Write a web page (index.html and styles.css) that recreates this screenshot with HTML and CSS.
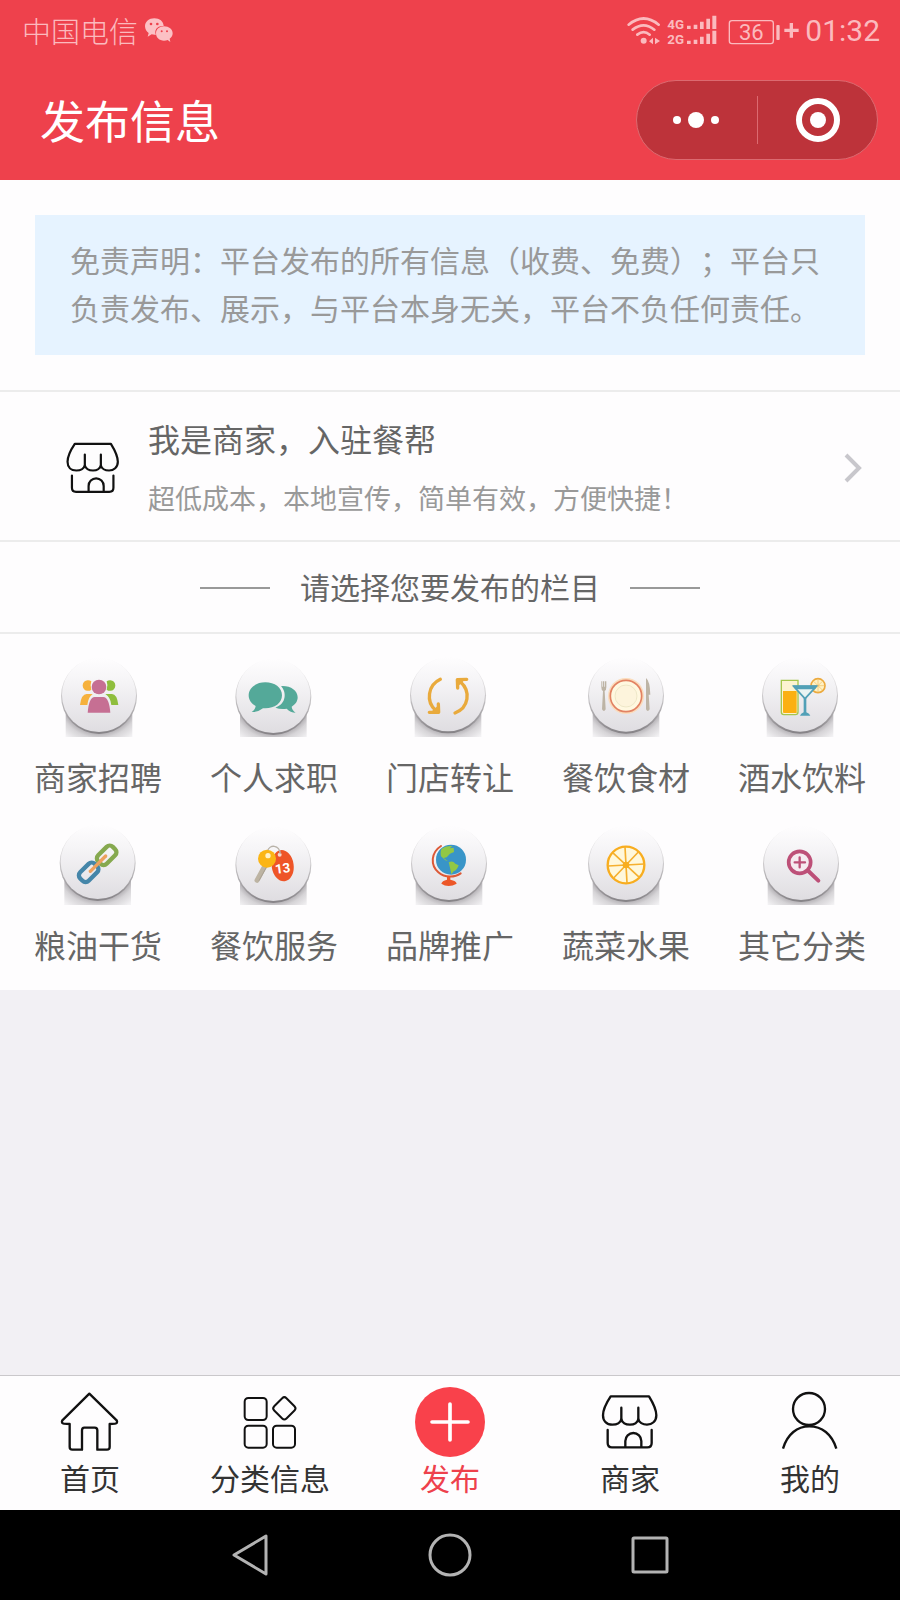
FILE: index.html
```html
<!DOCTYPE html>
<html lang="zh-CN">
<head>
<meta charset="utf-8">
<meta name="viewport" content="width=device-width, initial-scale=1">
<title>发布信息</title>
<link rel="stylesheet" href="styles.css">
</head>
<body>
<svg class="defs" width="0" height="0" aria-hidden="true">
  <defs>
    <linearGradient id="face" x1="0" y1="0" x2="0" y2="1">
      <stop offset="0" stop-color="#fefdfe"/><stop offset=".3" stop-color="#f6f5f7"/><stop offset="1" stop-color="#dfdde1"/>
    </linearGradient>
    <linearGradient id="rim" x1="0" y1="0" x2="0" y2="1">
      <stop offset="0" stop-color="#fdfcfd"/><stop offset=".45" stop-color="#d2d0d2"/><stop offset="1" stop-color="#858286"/>
    </linearGradient>
    <radialGradient id="shade" gradientUnits="userSpaceOnUse" cx="0" cy="0" r="165">
      <stop offset=".68" stop-color="#b4b1b5"/><stop offset=".77" stop-color="#d6d4d7"/><stop offset=".95" stop-color="#f3f2f4"/>
    </radialGradient>
    <g id="disc">
      <rect x="-100" y="45" width="200" height="100" fill="url(#shade)"/>
      <circle cy="1" r="114" fill="url(#rim)"/>
      <circle cy="-2" r="111" fill="url(#face)"/>
    </g>
    <symbol id="shop" viewBox="435 81 210 210">
      <g fill="none" stroke="#111" stroke-width="7" stroke-linecap="round" stroke-linejoin="round">
        <path d="M482 109H597C610 130 619 150 619 166C619 184 606 194 591 194C578 194 567 187 565 178C562 188 552 194 540 194C528 194 517 188 514 178C511 188 500 194 487 194C470 194 459 183 459 166C459 147 468 130 482 109Z"/>
        <path d="M514 143V178M565 143V178M473 210V249Q473 262 486 262H592Q605 262 605 249V210M526 262V243A24 24 0 0 1 574 243V262"/>
      </g>
    </symbol>
  </defs>
</svg>

<div class="app">
  <header class="header">
    <div class="status">
      <span class="carrier">中国电信</span>
      <svg class="wechat" viewBox="435 52 84 78" aria-hidden="true">
        <path fill="#fcc0c4" d="M463 56C447 56 435 66 435 80C435 89 440 96 446 100L443 111L455 104Q461 106 468 105C461 92 472 77 491 79C490 65 479 56 463 56Z"/>
        <path fill="#fcc0c4" d="M492 80C478 80 468 89 468 101C468 114 478 123 492 123Q498 123 503 121L511 127L509 117C515 113 518 107 518 101C518 89 507 80 492 80Z"/>
        <g fill="#ee414c"><circle cx="453" cy="73" r="4"/><circle cx="472" cy="73" r="4"/><circle cx="485" cy="95" r="3"/><circle cx="501" cy="95" r="3"/></g>
      </svg>
      <svg class="signals" viewBox="75 36 525 102" role="img" aria-label="信号与电量 36%">
        <g fill="none" stroke="#fbbabe" stroke-width="8" stroke-linecap="round">
          <path d="M86 71Q131 34 176 71M98 86Q131 60 163 86M112 101Q131 86 149 101"/>
        </g>
        <g fill="#fbbabe">
          <circle cx="131" cy="119" r="9"/>
          <path d="M159 110V130L147 121ZM165 110V130L180 120Z"/>
          <text class="net" x="202" y="83">4G</text>
          <text class="net" x="202" y="129">2G</text>
          <path d="M261 74h11v10h-11zM281 71h11v13h-11zM300 62h11v22h-11zM319 53h11v31h-11zM337 44h12v40h-12zM261 119h11v10h-11zM281 116h11v13h-11zM300 107h11v22h-11zM319 98h11v31h-11zM337 89h12v40h-12z"/>
          <text class="charge" x="417" y="118">36</text>
          <rect x="529" y="72" width="10" height="45" rx="3"/>
          <path d="M569 66h10v17h17v10h-17v17h-10v-17h-16v-10h16z"/>
        </g>
        <rect x="388" y="59" width="132" height="69" rx="8" fill="none" stroke="#fbbabe" stroke-width="4"/>
      </svg>
      <time class="clock">01:32</time>
    </div>
    <div class="titlebar">
      <h1 class="title">发布信息</h1>
      <div class="capsule">
        <button class="capsule-btn" type="button" aria-label="更多">
          <svg width="50" height="46" viewBox="-24 -23 50 46" fill="#fff"><circle cx="-19" r="4"/><circle r="8"/><circle cx="19" r="4"/></svg>
        </button>
        <span class="capsule-line"></span>
        <button class="capsule-btn" type="button" aria-label="关闭">
          <svg width="50" height="46" viewBox="-26 -23 50 46"><circle r="19" fill="none" stroke="#fff" stroke-width="6"/><circle r="8" fill="#fff"/></svg>
        </button>
      </div>
    </div>
  </header>

  <main class="content">
    <section class="notice-wrap">
      <p class="notice">免责声明：平台发布的所有信息（收费、免费）；平台只负责发布、展示，与平台本身无关，平台不负任何责任。</p>
    </section>

    <a class="merchant" href="#join">
      <svg class="merchant-icon" aria-hidden="true"><use href="#shop"/></svg>
      <span class="merchant-text">
        <span class="merchant-title">我是商家，入驻餐帮</span>
        <span class="merchant-sub">超低成本，本地宣传，简单有效，方便快捷！</span>
      </span>
      <svg class="chevron" viewBox="0 0 20 32" aria-hidden="true"><path d="M3 3L16 16L3 29" fill="none" stroke="#c8c7cc" stroke-width="4"/></svg>
    </a>

    <h2 class="heading"><span class="heading-text">请选择您要发布的栏目</span></h2>

    <nav class="grid" aria-label="栏目">
      <a class="cell" href="#c1">
        <svg class="cell-icon" viewBox="114 51 240 240" aria-hidden="true">
          <use href="#disc" x="237" y="167"/>
          <path fill="#f6b13c" d="M214 124A16 16 0 1 0 214 149Q209 137 214 124ZM180 195Q184 162 200 162H218Q204 172 202 195Z"/>
          <path fill="#8fbe3d" d="M260 124A16 16 0 1 1 260 149Q265 137 260 124ZM295 195Q291 162 276 162H256Q272 172 274 195Z"/>
          <circle cx="237" cy="141" r="22" fill="#c66f93"/>
          <path fill="#c66f93" d="M203 218Q207 171 224 171H250Q267 171 271 218Z"/>
        </svg>
        <span class="cell-label">商家招聘</span>
      </a>
      <a class="cell" href="#c2">
        <svg class="cell-icon" viewBox="642 51 240 240" aria-hidden="true">
          <use href="#disc" x="760" y="170"/>
          <path fill="#54a999" d="M788 138C813 138 833 152 833 172C833 184 826 194 815 200Q816 211 827 218Q811 218 800 206Q782 209 766 203C800 192 800 155 783 139Z"/>
          <path fill="#54a999" d="M736 127C764 127 786 143 786 166C786 189 764 205 736 205H729Q714 217 695 216Q706 209 707 198C694 191 686 180 686 166C686 143 708 127 736 127Z"/>
        </svg>
        <span class="cell-label">个人求职</span>
      </a>
      <a class="cell" href="#c3">
        <svg class="cell-icon" viewBox="150 51 240 240" aria-hidden="true">
          <use href="#disc" x="264" y="165"/>
          <g fill="none" stroke="#e9aa3c" stroke-width="10" stroke-linecap="round" stroke-linejoin="round">
            <path d="M241 118C204 135 196 185 228 212M208 217L236 217L235 192"/>
            <path d="M285 219C326 204 334 154 301 125M320 118L292 119L293 144"/>
          </g>
          <path fill="#e9aa3c" d="M212 217L236 217L235 196ZM316 118L292 119L293 140Z"/>
        </svg>
        <span class="cell-label">门店转让</span>
      </a>
      <a class="cell" href="#c4">
        <svg class="cell-icon" viewBox="138 51 240 240" aria-hidden="true">
          <use href="#disc" x="258" y="166"/>
          <circle cx="258" cy="168" r="54" fill="#fbdcbb"/>
          <circle cx="258" cy="168" r="47" fill="#fff8e0" stroke="#e28263" stroke-width="5"/>
          <circle cx="258" cy="168" r="33" fill="#fdf4dc" stroke="#e6dfbd" stroke-width="2"/>
          <path fill="#bdb4a5" d="M184 124H187V140H189V124H193V140H195V124H199V142Q199 151 194 153L197 208Q192 218 186 208L189 153Q184 151 184 142Z"/>
          <path fill="#bdb4a5" d="M318 114Q330 123 331 164H326L329 208Q323 218 318 208Z"/>
        </svg>
        <span class="cell-label">餐饮食材</span>
      </a>
      <a class="cell" href="#c5">
        <svg class="cell-icon" viewBox="666 51 240 240" aria-hidden="true">
          <use href="#disc" x="780" y="166"/>
          <circle cx="834" cy="137" r="21" fill="#fff1c4" stroke="#ecaa3e" stroke-width="5"/>
          <path stroke="#efbe61" stroke-width="2" d="M834 118V156M815 137H853M821 124L847 150M847 124L821 150"/>
          <path fill="#fcf3d0" stroke="#a6c64c" stroke-width="4" d="M724 121H774V216Q774 224 766 224H732Q724 224 724 216Z"/>
          <path fill="#fbb012" d="M729 153H770V219H732Q729 219 729 216Z"/>
          <path fill="#e9f3f3" stroke="#51a0b7" stroke-width="5" d="M761 139H829L795 176Z"/>
          <path fill="#51a0b7" d="M758 136H832L825 148H766ZM791 174H799V217Q809 221 811 227H780Q782 221 791 217Z"/>
        </svg>
        <span class="cell-label">酒水饮料</span>
      </a>
      <a class="cell" href="#c6">
        <svg class="cell-icon" viewBox="114 45 240 240" aria-hidden="true">
          <use href="#disc" x="233" y="158"/>
          <g fill="none" stroke-width="13">
            <rect x="-31" y="-18" width="62" height="36" rx="13" stroke="#86a94f" transform="translate(260 136) rotate(-45)"/>
            <rect x="-31" y="-18" width="62" height="36" rx="13" stroke="#4586a9" transform="translate(206 187) rotate(-45)"/>
            <path d="M257 138L211 184" stroke="#eda15e" stroke-width="10" stroke-linecap="round"/>
          </g>
        </svg>
        <span class="cell-label">粮油干货</span>
      </a>
      <a class="cell" href="#c7">
        <svg class="cell-icon" viewBox="642 45 240 240" aria-hidden="true">
          <use href="#disc" x="760" y="164"/>
          <ellipse cx="788" cy="167" rx="33" ry="47" fill="#ee5528" transform="rotate(-8 788 167)"/>
          <circle cx="779" cy="134" r="6" fill="#f7d8cc"/>
          <path d="M743 122C748 104 778 102 781 132" fill="none" stroke="#b8b2a8" stroke-width="4"/>
          <path d="M738 162L711 211" stroke="#bdb4a3" stroke-width="15" stroke-linecap="round"/>
          <path d="M741 168L717 212" stroke="#a9a193" stroke-width="3"/>
          <circle cx="741" cy="146" r="27" fill="#fbb515"/>
          <circle cx="744" cy="137" r="8" fill="#fff2c8"/>
          <text class="tag" x="788" y="189" transform="rotate(-8 788 176)">13</text>
        </svg>
        <span class="cell-label">餐饮服务</span>
      </a>
      <a class="cell" href="#c8">
        <svg class="cell-icon" viewBox="148 45 240 240" aria-hidden="true">
          <use href="#disc" x="265" y="161"/>
          <path d="M241 108C210 128 209 166 233 187C253 205 284 202 300 190" fill="none" stroke="#dc5937" stroke-width="6" stroke-linecap="round"/>
          <path fill="#ec5728" d="M259 198H269V209Q287 212 288 221Q276 228 264 228Q252 228 242 221Q244 212 259 209Z"/>
          <circle cx="271" cy="149" r="45" fill="#3995c8"/>
          <path fill="#92c846" d="M243 116Q255 106 275 108L267 115L279 113L280 126L268 131L258 142L249 144L262 154L254 151L241 139Q238 124 243 116ZM264 157Q276 151 284 161L294 166Q290 180 279 184L272 193L269 178Z"/>
        </svg>
        <span class="cell-label">品牌推广</span>
      </a>
      <a class="cell" href="#c9">
        <svg class="cell-icon" viewBox="668 45 240 240" aria-hidden="true">
          <use href="#disc" x="788" y="161"/>
          <circle cx="788" cy="165" r="55" fill="#fff8db" stroke="#f8ad1f" stroke-width="7"/>
          <g stroke="#f5b02f" stroke-width="5"><path d="M785 111L791 219M734 168L842 162M748 128L828 202M825 126L751 204"/></g>
          <circle cx="788" cy="165" r="10" fill="#f8ad1f"/>
        </svg>
        <span class="cell-label">蔬菜水果</span>
      </a>
      <a class="cell" href="#c10">
        <svg class="cell-icon" viewBox="1189 45 240 240" aria-hidden="true">
          <use href="#disc" x="1306" y="161"/>
          <g fill="none" stroke="#bd5078" stroke-linecap="round">
            <circle cx="1302" cy="157" r="33" stroke-width="11" fill="#f5eaf0"/>
            <path d="M1287 157H1318M1302 142V172" stroke-width="7"/>
            <path d="M1328 183L1358 212" stroke-width="12"/>
          </g>
        </svg>
        <span class="cell-label">其它分类</span>
      </a>
    </nav>
  </main>

  <nav class="tabbar" aria-label="主导航">
    <a class="tab" href="#home">
      <svg class="tab-icon" viewBox="165 81 210 210" aria-hidden="true"><path d="M268 101L350 181Q354 190 345 191L329 192V261Q329 269 321 269H292V211Q292 203 284 203H253Q246 203 246 211V269H217Q209 269 209 261V192L192 191Q183 190 187 181Z" fill="none" stroke="#111" stroke-width="7" stroke-linejoin="round"/></svg>
      <span class="tab-label">首页</span>
    </a>
    <a class="tab" href="#list">
      <svg class="tab-icon" viewBox="705 81 210 210" aria-hidden="true"><g fill="none" stroke="#111" stroke-width="6"><rect x="734" y="114" width="66" height="66" rx="11"/><rect x="734" y="197" width="66" height="66" rx="11"/><rect x="819" y="197" width="66" height="66" rx="11"/><rect x="827" y="119" width="52" height="52" rx="9" transform="rotate(45 853 145)"/></g></svg>
      <span class="tab-label">分类信息</span>
    </a>
    <a class="tab tab-active" href="#post" aria-current="page">
      <svg class="tab-icon" viewBox="-105 -105 210 210" aria-hidden="true"><circle r="105" fill="#f9414b"/><path d="M-54 0H54M0 -54V54" stroke="#fff" stroke-width="11" stroke-linecap="round"/></svg>
      <span class="tab-label">发布</span>
    </a>
    <a class="tab" href="#shops">
      <svg class="tab-icon" aria-hidden="true"><use href="#shop"/></svg>
      <span class="tab-label">商家</span>
    </a>
    <a class="tab" href="#me">
      <svg class="tab-icon" viewBox="975 81 210 210" aria-hidden="true"><g fill="none" stroke="#111" stroke-width="7"><circle cx="1077" cy="147" r="48"/><path d="M999 266C1012 222 1042 199 1078 199C1115 199 1146 222 1159 266"/></g></svg>
      <span class="tab-label">我的</span>
    </a>
  </nav>

  <footer class="sysnav">
    <button class="sys-btn" type="button" aria-label="返回"><svg width="48" height="48" viewBox="0 0 48 48"><path d="M40 5V43L8 24Z"/></svg></button>
    <button class="sys-btn" type="button" aria-label="主屏幕"><svg width="48" height="48" viewBox="0 0 48 48"><circle cx="24" cy="24" r="20"/></svg></button>
    <button class="sys-btn" type="button" aria-label="最近任务"><svg width="48" height="48" viewBox="0 0 48 48"><rect x="7" y="7" width="34" height="34" rx="1"/></svg></button>
  </footer>
</div>
</body>
</html>
```
FILE: styles.css
```css
* {
  box-sizing: border-box;
}

body {
  margin: 0;
  background: #f2f0f4;
  color: #666;
  font-family: "Noto Sans CJK SC", sans-serif;
  font-weight: 400;
  text-spacing-trim: space-all;
}

a {
  color: inherit;
  text-decoration: none;
}

button {
  padding: 0;
  border: 0;
  background: none;
}

svg {
  display: block;
  flex: none;
}

.defs {
  position: absolute;
}

.app {
  display: flex;
  flex-direction: column;
  min-height: 100vh;
}

/* Header */
.header {
  background: #ee414c;
  color: #fff;
}

.status {
  display: flex;
  align-items: center;
  height: 60px;
  padding: 0 20px 0 22px;
  color: #fbbabe;
}

.carrier {
  font-size: 29px;
  font-weight: 300;
  line-height: 60px;
}

.wechat {
  width: 28px;
  height: 26px;
  margin-left: 7px;
}

.signals {
  width: 175px;
  height: 34px;
  margin-left: auto;
}

.net {
  font: 700 40px Roboto, sans-serif;
}

.charge {
  font: 400 66px Roboto, sans-serif;
}

.clock {
  margin-left: 5px;
  padding-top: 2px;
  font: 400 30px/58px Roboto, sans-serif;
}

.titlebar {
  display: flex;
  align-items: center;
  justify-content: space-between;
  height: 120px;
  padding: 0 22px 0 40px;
}

.title {
  margin: 0;
  font-size: 45px;
  font-weight: 400;
  line-height: 60px;
}

.capsule {
  display: flex;
  align-items: center;
  width: 242px;
  height: 80px;
  border: 1px solid #dc6a70;
  border-radius: 40px;
  background: #bd333a;
}

.capsule-btn {
  display: flex;
  flex: 1;
  justify-content: center;
}

.capsule-line {
  width: 1px;
  height: 48px;
  background: #dc6a70;
}

/* Content */
.content {
  background: #fefdfe;
}

.notice-wrap {
  padding: 35px;
  border-bottom: 2px solid #ececec;
}

.notice {
  margin: 0;
  padding: 20px 35px 24px;
  background: #e6f3ff;
  color: #999;
  font-size: 30px;
  line-height: 48px;
}

.merchant {
  display: flex;
  align-items: center;
  padding: 22px 37px 18px 60px;
  border-bottom: 2px solid #ececec;
}

.merchant-icon {
  width: 66px;
  height: 66px;
}

.merchant-text {
  display: flex;
  flex: 1;
  flex-direction: column;
  gap: 12px;
  margin-left: 22px;
}

.merchant-title {
  font-size: 32px;
  line-height: 48px;
}

.merchant-sub {
  color: #999;
  font-size: 27px;
  line-height: 48px;
}

.chevron {
  width: 20px;
  height: 32px;
}

.heading {
  display: flex;
  align-items: center;
  justify-content: center;
  gap: 30px;
  height: 92px;
  margin: 0;
  padding-top: 2px;
  border-bottom: 2px solid #ececec;
  font-size: 30px;
  font-weight: 400;
}

.heading-text {
  padding-bottom: 4px;
}

.heading::before,
.heading::after {
  content: "";
  width: 70px;
  height: 2px;
  background: #999;
}

.grid {
  display: grid;
  grid-template-columns: repeat(5, 1fr);
  row-gap: 25px;
  padding: 23px 10px 22px;
}

.cell {
  display: flex;
  flex-direction: column;
  align-items: center;
  gap: 15px;
}

.cell-icon {
  width: 80px;
  height: 80px;
}

.cell-label {
  font-size: 32px;
  line-height: 48px;
}

.tag {
  fill: #fff;
  font: 700 40px Roboto, sans-serif;
  text-anchor: middle;
}

/* Tab bar */
.tabbar {
  display: grid;
  grid-template-columns: repeat(5, 1fr);
  margin-top: auto;
  padding: 11px 0 13px;
  border-top: 1px solid #cac8cb;
  background: #fefdfe;
  color: #333;
}

.tab {
  display: flex;
  flex-direction: column;
  align-items: center;
}

.tab-icon {
  width: 70px;
  height: 70px;
}

.tab-label {
  font-size: 30px;
  line-height: 40px;
}

.tab-active {
  color: #ee414c;
}

.sysnav {
  display: flex;
  align-items: center;
  justify-content: center;
  gap: 152px;
  height: 90px;
  background: #000;
}

.sys-btn svg {
  fill: none;
  stroke: #b3b3b3;
  stroke-width: 3;
  stroke-linejoin: round;
}
```
